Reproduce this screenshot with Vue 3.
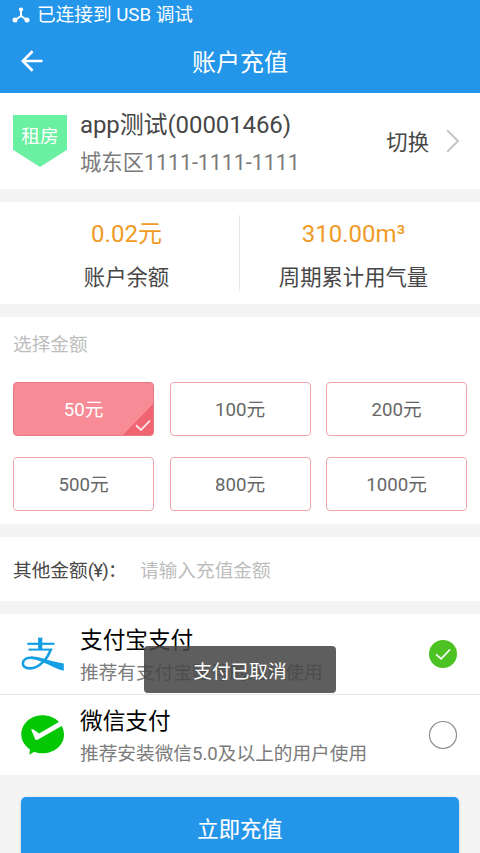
<script setup>
import { ref } from 'vue'

const amounts = [50, 100, 200, 500, 800, 1000]
const selected = ref(50)
const custom = ref('')
const method = ref('alipay')
const stats = [
  { value: '0.02元', label: '账户余额' },
  { value: '310.00m³', label: '周期累计用气量' },
]
const methods = [
  { id: 'alipay', name: '支付宝支付', hint: '推荐有支付宝账号的用户使用' },
  { id: 'wechat', name: '微信支付', hint: '推荐安装微信5.0及以上的用户使用' },
]
</script>

<template>
  <div class="screen" lang="zh-CN">
    <header class="top">
      <div class="status">
        <svg class="status-icon" viewBox="0 0 18 16">
          <path d="M9 3V9M9 9L3 13M9 9L15 13" fill="none" stroke="#fff" stroke-width="2" />
          <circle cx="9" cy="2.6" r="2.1" fill="#fff" />
          <circle cx="3" cy="13" r="2.5" fill="#fff" />
          <circle cx="15" cy="13" r="2.5" fill="#fff" />
        </svg>
        <span>已连接到 USB 调试</span>
      </div>
      <div class="nav">
        <svg class="back" viewBox="0 0 22 22">
          <path d="M21.5 11H2M11.6 1.2L1.8 11L11.6 20.8" fill="none" stroke="#fff" stroke-width="2.7" />
        </svg>
        <h1>账户充值</h1>
      </div>
    </header>

    <section class="account">
      <div class="badge"><span>租房</span></div>
      <div class="who">
        <div class="name">app测试(00001466)</div>
        <div class="addr">城东区1111-1111-1111</div>
      </div>
      <span class="switch">切换</span>
      <svg class="chevron" viewBox="0 0 14 24">
        <path d="M1.2 1.2L12 12L1.2 22.8" fill="none" stroke="#c5c5c5" stroke-width="2" />
      </svg>
    </section>

    <section class="stats">
      <div v-for="s in stats" :key="s.label" class="stat">
        <div class="value">{{ s.value }}</div>
        <div class="label">{{ s.label }}</div>
      </div>
    </section>

    <section class="choose">
      <div class="caption">选择金额</div>
      <div class="grid">
        <button
          v-for="a in amounts"
          :key="a"
          class="tile"
          :class="{ active: a === selected }"
          @click="selected = a"
        >
          <span>{{ a }}元</span>
          <svg v-if="a === selected" class="corner" viewBox="0 0 32 36">
            <path d="M32 3V36H0Z" fill="#f06371" />
            <path d="M14 25.3L19 30L28 20.7" fill="none" stroke="#fde3e5" stroke-width="1.9" />
          </svg>
        </button>
      </div>
    </section>

    <section class="other">
      <label for="custom">其他金额<span class="unit">(¥)</span>：</label>
      <input id="custom" v-model="custom" placeholder="请输入充值金额" />
    </section>

    <section class="methods">
      <div v-for="m in methods" :key="m.id" class="method" @click="method = m.id">
        <svg v-if="m.id === 'alipay'" class="logo" viewBox="0 0 44 44">
          <g fill="none" stroke="#149fe4">
            <path d="M6.3 11.8H33.4" stroke-width="2.2" />
            <path d="M7.5 17.6H31.4" stroke-width="2" />
            <path d="M19.2 5.6V17.5" stroke-width="4.2" />
            <path d="M29.6 17.6C27 26 18.5 36.3 8.8 36.4C3.8 36.4 1.6 34 1.9 31C2.3 27.4 6 25.2 12 25.8" stroke-width="2.6" />
          </g>
          <path d="M10 24.6C19 24.2 28 29.6 42.8 31.4V38.8C33 36.6 22 28.4 10 27Z" fill="#149fe4" />
        </svg>
        <svg v-else class="logo" viewBox="0 0 44 44">
          <path
            d="M21.5 2.3C33.5 2.3 43 10.8 43 21.5S33.5 40.3 21.5 40.3C18.5 40.3 15.8 39.8 13.2 38.7L8.4 41.8L8.9 36.2C4 33 .3 27.5 .3 21.5C.3 10.8 9.8 2.3 21.5 2.3Z"
            fill="#04c804"
          />
          <path d="M10.2 16.8C10.8 16 12 16.2 12.8 16.8L18 20.4L38 9L41.6 12.6L17 26.6C15.8 27.3 14.8 27.2 14.2 26.2Z" fill="#fff" />
        </svg>
        <div class="info">
          <div class="m-name">{{ m.name }}</div>
          <div class="hint">{{ m.hint }}</div>
        </div>
        <svg class="radio" viewBox="0 0 30 30">
          <template v-if="m.id === method">
            <circle cx="15" cy="15" r="14" fill="#4dc323" />
            <path d="M8 15.4L13.2 19.8L22 10.5" fill="none" stroke="#fff" stroke-width="1.7" />
          </template>
          <circle v-else cx="15" cy="15" r="13.5" fill="#fff" stroke="#8c8c8c" stroke-width="1.2" />
        </svg>
      </div>
    </section>

    <button class="submit">立即充值</button>

    <div class="toast">支付已取消</div>
  </div>
</template>

<style>
body {
  margin: 0;
  overflow: hidden;
}
</style>

<style scoped>
* {
  box-sizing: border-box;
}
.screen {
  position: relative;
  display: flex;
  flex-direction: column;
  gap: 13px;
  width: 480px;
  height: 853px;
  overflow: hidden;
  background: #f4f4f4;
  color: #474747;
  font-family: Roboto, 'Noto Sans CJK SC', sans-serif;
  font-size: 18.67px;
  white-space: nowrap;
}
.screen > * {
  flex-shrink: 0;
}
section {
  background: #fff;
}
button {
  font-family: inherit;
  padding: 0;
}
.top {
  height: 93px;
  margin-bottom: -13px;
  background: #2496ea;
  color: #fff;
}
.status {
  display: flex;
  align-items: center;
  gap: 7px;
  height: 29px;
  padding-left: 12px;
}
.status span {
  padding-bottom: 4px;
}
.status-icon {
  width: 18px;
  height: 16px;
}
.nav {
  display: grid;
  grid-template-columns: 60px 1fr 60px;
  align-items: center;
  height: 64px;
}
.back {
  width: 22px;
  height: 22px;
  margin-left: 21px;
}
h1 {
  margin: 0;
  padding-top: 4px;
  text-align: center;
  font-size: 24px;
  font-weight: 400;
  line-height: 32px;
}
.account {
  display: flex;
  align-items: center;
  height: 96px;
  padding: 0 20px 0 13px;
}
.badge {
  width: 54px;
  height: 52px;
  margin-right: 13px;
  background: #69f0a0;
  color: #fff;
  text-align: center;
  line-height: 44px;
  clip-path: polygon(0 0, 100% 0, 100% 67%, 50% 100%, 0 67%);
}
.who {
  padding-top: 5px;
}
.name {
  font-size: 24px;
  letter-spacing: -0.1px;
  line-height: 38px;
}
.addr {
  color: #7b7b7b;
  font-size: 21.33px;
  line-height: 38px;
}
.switch {
  margin-left: auto;
  padding-bottom: 2px;
  font-size: 21.33px;
}
.chevron {
  width: 14px;
  height: 24px;
  margin-left: 17px;
}
.stats {
  display: grid;
  grid-template-columns: 239px 1fr;
  height: 102px;
  padding: 13px 0;
}
.stat {
  height: 76px;
  padding-left: 14px;
  text-align: center;
}
.stat + .stat {
  padding: 0 13px 0 0;
  border-left: 1px solid #e7e7e7;
}
.value {
  color: #ef9b26;
  font-size: 24px;
  line-height: 38px;
}
.label {
  font-size: 21.33px;
  line-height: 50px;
}
.choose {
  height: 207px;
  padding: 0 13px;
}
.caption {
  height: 65px;
  color: #bdbdbd;
  line-height: 57px;
}
.grid {
  display: grid;
  grid-template-columns: repeat(3, 1fr);
  gap: 21px 15.5px;
}
.tile {
  position: relative;
  height: 54px;
  overflow: hidden;
  padding-bottom: 3px;
  border: 1.33px solid #eda6ae;
  border-radius: 4px;
  background: #fff;
  color: #666;
  font-size: 18.67px;
}
.tile.active {
  border-color: #e67884;
  background: #f78b96;
  color: #fff;
}
.corner {
  position: absolute;
  right: -1px;
  bottom: -1px;
  width: 32px;
  height: 36px;
}
.other {
  display: flex;
  align-items: center;
  height: 64px;
  padding: 0 13px;
}
.other label {
  width: 127px;
  padding-bottom: 2px;
}
.unit {
  letter-spacing: -0.8px;
}
.other input {
  width: 300px;
  padding: 3px 0 0;
  border: 0;
  outline: 0;
  background: transparent;
  font: inherit;
}
.other input::placeholder {
  color: #bdbdbd;
  opacity: 1;
}
.method {
  display: flex;
  align-items: center;
  height: 80px;
  padding: 0 22px 0 21px;
}
.method + .method {
  height: 81px;
  border-top: 1px solid #e6e6e6;
}
.logo {
  width: 44px;
  height: 44px;
  margin-right: 15px;
}
.info {
  flex: 1;
  padding-top: 5px;
}
.m-name {
  color: #000;
  font-size: 22.67px;
  line-height: 33px;
}
.hint {
  color: #7b7b7b;
  line-height: 33px;
}
.radio {
  width: 30px;
  height: 30px;
}
.submit {
  height: 64px;
  margin: 9px 21px 0;
  padding-bottom: 3px;
  border: 0;
  border-radius: 5px;
  background: #2496ea;
  box-shadow: 0 1px 3px rgba(0, 0, 0, 0.2);
  color: #fff;
  font-size: 21.33px;
  -webkit-text-stroke: 0.15px #fff;
}
.toast {
  position: absolute;
  left: 144px;
  top: 646px;
  width: 192px;
  height: 47px;
  border-radius: 4px;
  background: rgba(70, 70, 70, 0.87);
  color: #fff;
  text-align: center;
  line-height: 52px;
}
</style>
